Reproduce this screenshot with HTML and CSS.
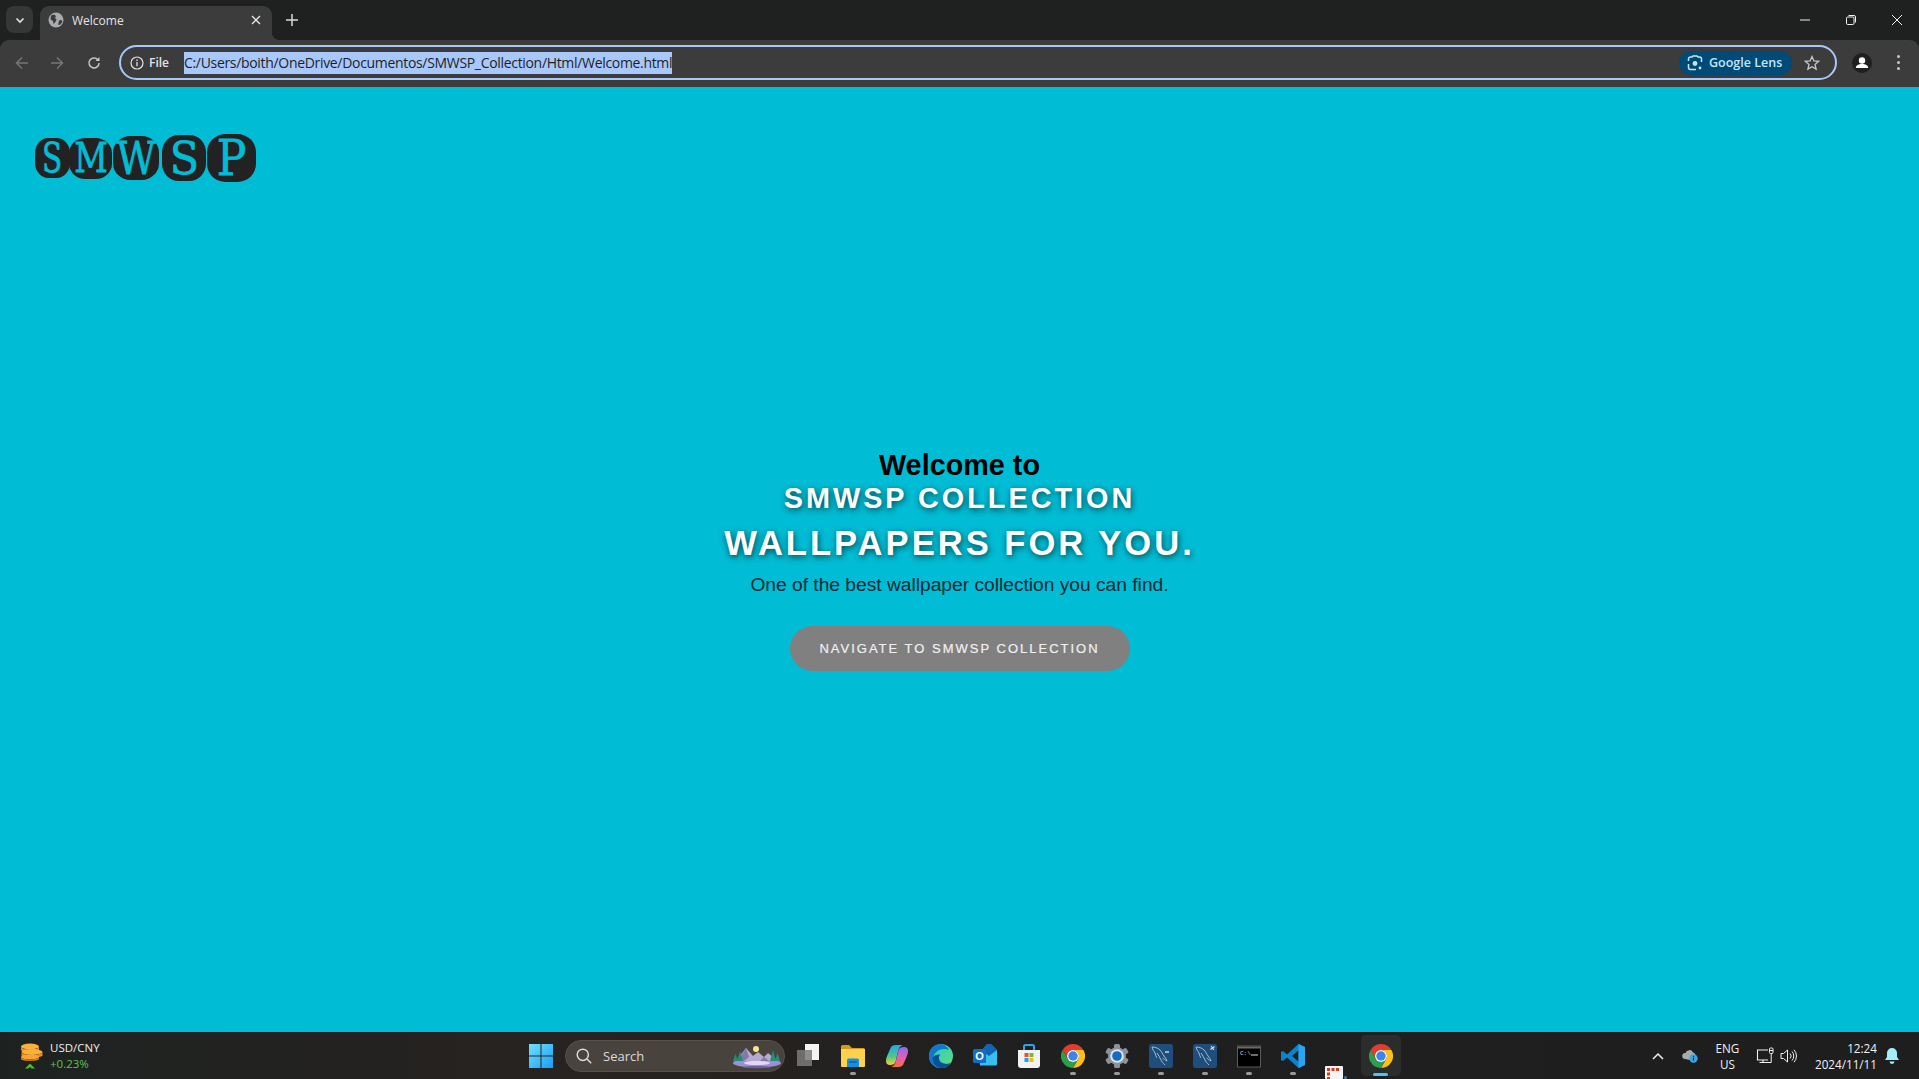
FILE: index.html
```html
<!DOCTYPE html>
<html lang="en">
<head>
    <meta charset="UTF-8">
    <title>Welcome</title>
    <link rel="stylesheet" href="styles.css">
</head>
<body>

    <!-- Pestañas -->
    <div class="tabstrip">
        <div class="tab-search">
            <svg width="12" height="12" viewBox="0 0 12 12"><path d="M2.5 4.5 6 8l3.5-3.5" fill="none" stroke="#e3e3e3" stroke-width="1.6"/></svg>
        </div>
        <div class="tab">
            <svg class="tab-favicon" width="16" height="16" viewBox="0 0 16 16"><circle cx="8" cy="8" r="7.5" fill="#a9abad"/><path d="M3 3.5 6 2.6 8 4 7 6 8.6 7.6 7.4 10 5.6 12 5 9 2.6 7.6ZM11 8.4l2.600-.4.800 2-2.400 3-1.800-.6Z" fill="#3c3c3c"/></svg>
            <span class="tab-title">Welcome</span>
            <svg class="tab-close" width="10" height="10" viewBox="0 0 10 10"><path d="M1 1l8 8M9 1 1 9" stroke="#e3e3e3" stroke-width="1.4"/></svg>
        </div>
        <svg class="new-tab" width="12" height="12" viewBox="0 0 12 12"><path d="M6 0v12M0 6h12" stroke="#d8d8d8" stroke-width="1.5"/></svg>
        <div class="window-controls">
            <svg width="10" height="10" viewBox="0 0 10 10"><path d="M0 5h10" stroke="#f0f0f0"/></svg>
            <svg width="10" height="10" viewBox="0 0 10 10"><rect x=".5" y="2" width="7.500" height="7.500" rx="1.200" fill="none" stroke="#f0f0f0"/><path d="M2.500.5H8a1.500 1.500 0 0 1 1.500 1.500v5.500" fill="none" stroke="#f0f0f0"/></svg>
            <svg width="10" height="10" viewBox="0 0 10 10"><path d="M0 0l10 10M10 0 0 10" stroke="#f0f0f0"/></svg>
        </div>
    </div>

    <!-- Barra de direcciones -->
    <div class="toolbar">
        <svg class="nav-icon" width="14" height="14" viewBox="0 0 14 14"><path d="M13 7H2M7 1.500 1.500 7 7 12.500" fill="none" stroke="#757575" stroke-width="1.500"/></svg>
        <svg class="nav-icon" width="14" height="14" viewBox="0 0 14 14"><path d="M1 7h11M7 1.500 12.500 7 7 12.500" fill="none" stroke="#757575" stroke-width="1.500"/></svg>
        <svg class="nav-icon" width="14" height="14" viewBox="0 0 14 14"><path d="M12 7a5 5 0 1 1-1.500-3.600" fill="none" stroke="#c7c7c7" stroke-width="1.500"/><path d="M12.500 1v4h-4Z" fill="#c7c7c7"/></svg>
        <div class="omnibox">
            <svg class="omni-info" width="14" height="14" viewBox="0 0 14 14"><circle cx="7" cy="7" r="6" fill="none" stroke="#e3e3e3" stroke-width="1.200"/><path d="M7 6v4.200M7 3.600v1.300" stroke="#e3e3e3" stroke-width="1.300"/></svg>
            <span class="omni-file">File</span>
            <span class="omni-url">C:/Users/boith/OneDrive/Documentos/SMWSP_Collection/Html/Welcome.html</span>
            <div class="lens-pill">
                <svg width="16" height="16" viewBox="0 0 16 16"><path d="M1.500 6V4a2 2 0 0 1 2-2H5l1-1h4l1 1h1.500a2 2 0 0 1 2 2v3M1.500 9v3.500a2 2 0 0 0 2 2H9" fill="none" stroke="#c2e7ff" stroke-width="1.500"/><circle cx="8" cy="8.500" r="2.400" fill="#c2e7ff"/><circle cx="13" cy="13" r="1.400" fill="#c2e7ff"/></svg>
                <span>Google Lens</span>
            </div>
            <svg class="omni-star" width="16" height="16" viewBox="0 0 16 16"><path d="M8 1.600 9.900 6l4.700.4-3.600 3.100 1.100 4.600L8 11.700 3.900 14.100 5 9.500 1.400 6.400 6.100 6Z" fill="none" stroke="#c7c7c7" stroke-width="1.300"/></svg>
        </div>
        <div class="profile">
            <svg width="20" height="20" viewBox="0 0 20 20"><circle cx="10" cy="10" r="10" fill="#1f1f1f"/><circle cx="10" cy="7.500" r="3.200" fill="#fff"/><path d="M3.800 15c0-2.800 3-4 6.200-4s6.200 1.200 6.200 4Z" fill="#fff"/></svg>
        </div>
        <div class="kebab"><i></i><i></i><i></i></div>
    </div>

    <!-- Contenido de la página -->
    <main class="page">
        <div class="logo">
            <span class="logo-blob blob-1"><b>S</b></span>
            <span class="logo-blob blob-2"><b>M</b></span>
            <span class="logo-blob blob-3"><b>W</b></span>
            <span class="logo-blob blob-4"><b>S</b></span>
            <span class="logo-blob blob-5"><b>P</b></span>
        </div>
        <section class="hero">
            <h1 class="hero-title">Welcome to<br><span class="hero-name">SMWSP COLLECTION</span></h1>
            <h2 class="hero-sub">WALLPAPERS FOR YOU.</h2>
            <p class="hero-text">One of the best wallpaper collection you can find.</p>
            <button class="hero-btn">NAVIGATE TO SMWSP COLLECTION</button>
        </section>
    </main>

    <!-- Barra de tareas -->
    <footer class="taskbar">
        <div class="widget">
            <div class="widget-icon">
                <svg width="24" height="26" viewBox="0 0 24 26">
                    <ellipse cx="11" cy="3.500" rx="9" ry="3" fill="#fbb03b"/>
                    <path d="M2 3.500v3.500c0 1 3 2 9 2s9-1 9-2V3.500c0 1.600-3 3-9 3s-9-1.400-9-3Z" fill="#f08c1e"/>
                    <ellipse cx="13" cy="9" rx="10.500" ry="3" fill="#fbb03b"/>
                    <path d="M2.500 9v3.500c0 1 4 2 10.500 2s10.500-1 10.500-2V9c0 1.600-4 3-10.500 3S2.500 10.600 2.500 9Z" fill="#f08c1e"/>
                    <ellipse cx="11" cy="14" rx="9" ry="2.500" fill="#f9a531"/>
                    <path d="M2 14v2c0 1 3 1.800 9 1.800s9-.8 9-1.800v-2c0 1.400-3 2.500-9 2.500S2 15.400 2 14Z" fill="#e8831b"/>
                    <path d="M6 25.500 11 20.500l5 5h-3.400L11 23.900 9.400 25.500Z" fill="#46c02a"/>
                </svg>
            </div>
            <div class="widget-text">
                <span>USD/CNY</span>
                <span class="widget-change">+0.23%</span>
            </div>
        </div>

        <svg class="start" width="24" height="24" viewBox="0 0 24 24">
            <defs><linearGradient id="startGrad" x1="0" y1="0" x2="1" y2="1"><stop offset="0" stop-color="#6fe0ff"/><stop offset="1" stop-color="#1a9cf5"/></linearGradient></defs>
            <path d="M0 0h11.500v11.500H0ZM12.500 0H24v11.500H12.500ZM0 12.500h11.500V24H0ZM12.500 12.500H24V24H12.500Z" fill="url(#startGrad)"/>
        </svg>

        <div class="search">
            <svg width="16" height="16" viewBox="0 0 16 16"><circle cx="6.800" cy="6.800" r="5.600" fill="none" stroke="#dcdad6" stroke-width="1.500"/><path d="M11 11l4.200 4.200" stroke="#dcdad6" stroke-width="1.500"/></svg>
            <span class="search-label">Search</span>
            <svg class="search-art" width="50" height="26" viewBox="0 0 50 26">
                <ellipse cx="25" cy="20" rx="24" ry="4.500" fill="#9a8fd8"/>
                <ellipse cx="25" cy="20" rx="13" ry="2.200" fill="#e4d6f5"/>
                <circle cx="24" cy="6" r="3" fill="#fbe38a"/>
                <path d="M4 18 14 5l7 8 5-4 6 5 4-4 10 8Z" fill="#b6a9cf"/>
                <path d="M14 5l3 9-5 4H6ZM32 14l5 4h-9Z" fill="#7f7aa8"/>
                <path d="M5 18 8 8l3 10ZM1 18l2.500-7L6 18ZM38 18l3-11 3 11ZM43 18l2.500-8L48 18Z" fill="#2a8a78"/>
                <ellipse cx="25" cy="24" rx="14" ry="1.200" fill="#6b62a8"/>
            </svg>
        </div>

        <div class="apps">
            <div class="app">
                <svg width="24" height="24" viewBox="0 0 24 24"><rect x="8" y="0" width="14" height="16" fill="#f4f4f4"/><rect x="0" y="6" width="15" height="16" fill="#7a7a7a" opacity=".85"/></svg>
            </div>
            <div class="app app-open">
                <svg width="24" height="24" viewBox="0 0 24 24"><path d="M0 2.500A1.500 1.500 0 0 1 1.500 1H8l3 3h11.500A1.500 1.500 0 0 1 24 5.500V9H0Z" fill="#d39a1a"/><path d="M0 5h24v17a1 1 0 0 1-1 1H1a1 1 0 0 1-1-1Z" fill="#fbd24e"/><path d="M6 16a1.500 1.500 0 0 1 1.500-1.500h9A1.500 1.500 0 0 1 18 16v7H6Z" fill="#1a8fe0"/><path d="M8 18h8" stroke="#0a5fae" stroke-width="1.500"/></svg>
            </div>
            <div class="app">
                <svg width="24" height="24" viewBox="0 0 24 24">
                    <defs><linearGradient id="coA" x1="0" y1="0" x2="0" y2="1"><stop offset="0" stop-color="#2a9ff0"/><stop offset=".55" stop-color="#46c98a"/><stop offset="1" stop-color="#f4d13c"/></linearGradient><linearGradient id="coB" x1="0" y1="0" x2="0" y2="1"><stop offset="0" stop-color="#8a6cf2"/><stop offset=".55" stop-color="#e55fb4"/><stop offset="1" stop-color="#f4703a"/></linearGradient></defs>
                    <path d="M6 3Q7.500 1 10 1H18Q14.500 2 13.300 6L10.500 18Q9.500 21 5 21 1 21 1 17 1 14 2.500 11Z" fill="url(#coA)"/>
                    <path d="M18 21Q16.500 23 14 23H6Q9.500 22 10.700 18L13.500 6Q14.500 3 19 3 23 3 23 7 23 10 21.500 13Z" fill="url(#coB)"/>
                </svg>
            </div>
            <div class="app">
                <svg width="24" height="24" viewBox="0 0 24 24">
                    <defs><linearGradient id="edgeA" x1="0" y1="0" x2="1" y2="1"><stop offset="0" stop-color="#2bc3d6"/><stop offset="1" stop-color="#5fe07a"/></linearGradient></defs>
                    <circle cx="12" cy="12" r="12" fill="url(#edgeA)"/>
                    <path d="M12 0C5.400 0 0 5.400 0 12c0 6.600 5.400 12 12 12 4 0 7.500-2 9.600-5-2 1-6 1.500-9-.5C9.500 16.500 9 12.500 11 10.500c-3-.5-6 1-7 4C5 7.500 12 3 20 6 18 2.500 15.200 0 12 0Z" fill="#0f78c8"/>
                    <path d="M3.500 14c0 5 4 9.500 9 10 3.500 0 6.800-1.800 9-5-3 1.400-7 1.200-9.800-.8C9.400 16 9.400 12.500 11 10.800 7.500 10.200 4.500 11.500 3.500 14Z" fill="#0a4f96"/>
                </svg>
            </div>
            <div class="app">
                <svg width="24" height="24" viewBox="0 0 24 24">
                    <path d="M14 0h4l6 6v13a1.500 1.500 0 0 1-1.500 1.500H9V6Z" fill="#1b86d6"/>
                    <path d="M6 13l18-7v14a1.500 1.500 0 0 1-1.500 1.500H7Z" fill="#35c0f0"/>
                    <path d="M14 0h4l6 6-8 6-7-5Z" fill="#0f64b6"/>
                    <rect x="0" y="5" width="13" height="14" rx="1.500" fill="#0f6cc8"/>
                    <text class="outlook-o" x="6.500" y="16.200" text-anchor="middle">O</text>
                </svg>
            </div>
            <div class="app">
                <svg width="24" height="24" viewBox="0 0 24 24">
                    <path d="M7 6V2.500A1.500 1.500 0 0 1 8.500 1h7A1.500 1.500 0 0 1 17 2.500V6" fill="none" stroke="#29a6e8" stroke-width="2"/>
                    <path d="M1 6h22v15a3 3 0 0 1-3 3H4a3 3 0 0 1-3-3Z" fill="#f2f2f2"/>
                    <rect x="7.500" y="9" width="4" height="4" fill="#f0502e"/><rect x="12.500" y="9" width="4" height="4" fill="#7fba2a"/>
                    <rect x="7.500" y="14" width="4" height="4" fill="#1ca4ee"/><rect x="12.500" y="14" width="4" height="4" fill="#fcb813"/>
                </svg>
            </div>
            <div class="app app-open">
                <svg width="24" height="24" viewBox="0 0 48 48"><use href="#chromeIcon"/></svg>
            </div>
            <div class="app app-open">
                <svg width="24" height="24" viewBox="0 0 24 24">
                    <g fill="#8b929b">
                        <rect x="9" y="0" width="6" height="24" rx="1.500"/>
                        <rect x="9" y="0" width="6" height="24" rx="1.500" transform="rotate(60 12 12)"/>
                        <rect x="9" y="0" width="6" height="24" rx="1.500" transform="rotate(120 12 12)"/>
                        <circle cx="12" cy="12" r="9"/>
                    </g>
                    <circle cx="12" cy="12" r="6.800" fill="#e4e6e8"/><circle cx="12" cy="12" r="4.800" fill="#0f6cc8"/>
                </svg>
            </div>
            <div class="app app-open">
                <svg width="24" height="24" viewBox="0 0 24 24"><use href="#mysqlIcon"/><path d="M16 8h4" stroke="#d5dde6" stroke-width="1.400"/></svg>
            </div>
            <div class="app app-open">
                <svg width="24" height="24" viewBox="0 0 24 24"><use href="#mysqlIcon"/><path d="M18 2l3 4M21.500 2.500l-4 3" stroke="#d5dde6" stroke-width="1.200"/></svg>
            </div>
            <div class="app app-open">
                <svg width="24" height="24" viewBox="0 0 24 24"><rect x=".5" y="2" width="23" height="21" fill="#000" stroke="#5a5a5a"/><rect x="1" y="2.500" width="22" height="2" fill="#6a6a6a"/><text class="cmd-text" x="3" y="11">C:\</text><path d="M14 11h7" stroke="#d8d8d8"/></svg>
            </div>
            <div class="app app-open">
                <svg width="24" height="24" viewBox="0 0 24 24"><path d="M17.500 0 24 3v18l-6.500 3L6 13.500 2 17l-2-1V8l2-1 4 3.500Zm0 6.500L11 12l6.500 5.500Z" fill="#0a82d0"/><path d="M17.500 0 24 3v18l-6.500 3Z" fill="#2aa3f0"/></svg>
            </div>
            <div class="app app-float">
                <svg class="float-doc" width="22" height="13" viewBox="0 0 22 13"><rect width="18" height="13" rx="1" fill="#f4f4f4"/><path d="M2 2h3v3H2ZM6.500 2h3v3h-3ZM11 2h3v3h-3ZM2 6.500h3v3H2ZM2 11h3v2H2Z" fill="#d9361f"/><circle cx="20.500" cy="11.500" r="1.500" fill="#2a7fb8"/></svg>
            </div>
            <div class="app app-active">
                <svg width="24" height="24" viewBox="0 0 48 48"><use href="#chromeIcon"/></svg>
            </div>
        </div>

        <div class="tray">
            <svg class="tray-chevron" width="12" height="8" viewBox="0 0 12 8"><path d="M1 7l5-5 5 5" fill="none" stroke="#f0f0f0" stroke-width="1.500"/></svg>
            <svg class="tray-cloud" width="16" height="14" viewBox="0 0 16 14"><path d="M3 10a3 3 0 0 1 .5-6A4 4 0 0 1 11 3.500a3 3 0 0 1 2 4.500L8 11Z" fill="#a9acaf"/><circle cx="11.500" cy="9.500" r="4.200" fill="#3ba7e8"/><path d="M11.500 8.600v3M11.500 6.800v1" stroke="#102030" stroke-width="1.200"/></svg>
            <div class="tray-lang"><span>ENG</span><span>US</span></div>
            <svg class="tray-net" width="18" height="18" viewBox="0 0 18 18"><path d="M12 3H1.500v10H12M3.500 15.500h8M7 13v2.500" fill="none" stroke="#f0f0f0" stroke-width="1.100"/><rect x="13.500" y="1" width="3.500" height="5.500" rx="1" fill="none" stroke="#f0f0f0"/><path d="M15.200 6.500v9H11M13.500 3.500h3.500" fill="none" stroke="#f0f0f0"/></svg>
            <svg class="tray-sound" width="17" height="16" viewBox="0 0 17 16"><path d="M1 5.500h2.500L7.500 2v12l-4-3.500H1Z" fill="none" stroke="#f0f0f0" stroke-width="1"/><path d="M10 5.500a3.500 3.500 0 0 1 0 5M12 3.500a6.500 6.500 0 0 1 0 9M14 1.800a9 9 0 0 1 0 12.400" fill="none" stroke="#f0f0f0" stroke-width="1"/></svg>
            <div class="tray-clock"><span>12:24</span><span>2024/11/11</span></div>
            <svg class="tray-bell" width="14" height="16" viewBox="0 0 14 16"><path d="M7 0a5 5 0 0 1 5 5v4l2 3H0l2-3V5a5 5 0 0 1 5-5Z" fill="#a5ecfb"/><path d="M4.500 13.500h5a2.500 2.500 0 0 1-5 0Z" fill="#a5ecfb"/></svg>
        </div>
    </footer>

    <!-- Iconos compartidos -->
    <svg class="icon-defs" width="0" height="0">
        <defs>
            <g id="chromeIcon">
                <path d="M3.200 12A24 24 0 0 1 44.800 12H24A12 12 0 0 0 13.600 30Z" fill="#e33b2e"/>
                <path d="M44.800 12A24 24 0 0 1 24 48L34.400 30A12 12 0 0 0 24 12Z" fill="#fbc116"/>
                <path d="M24 48A24 24 0 0 1 3.200 12L13.600 30A12 12 0 0 0 34.400 30Z" fill="#2f9e4a"/>
                <circle cx="24" cy="24" r="12" fill="#fff"/>
                <circle cx="24" cy="24" r="9.500" fill="#3f84ee"/>
            </g>
            <g id="mysqlIcon">
                <rect width="24" height="24" rx="2.500" fill="#1e4f7c"/>
                <path d="M3 3c3 0 6 1 8 3 2 2 2.500 4 4 6 1 1.400 2.500 3 3 5-2-1-3-2-4.500-3M3 3c.5 3 2 4 3 6 .8 2 .8 3.400 1.800 4.800M8 9c1.500 2 3 5 4 7 .7 1.500 2 3 4 5" fill="none" stroke="#c6d3df" stroke-width=".8"/>
            </g>
        </defs>
    </svg>

</body>
</html>
```

FILE: styles.css
```css
* {
    box-sizing: border-box;
}
body {
    margin: 0;
    height: 100vh;
    overflow: hidden;
    display: flex;
    flex-direction: column;
    background: #1f2120;
    font-family: "Liberation Sans", Arial, sans-serif;
}

/* Pestañas */
.tabstrip {
    height: 40px;
    flex: none;
    display: flex;
    align-items: flex-start;
    padding: 6px 0 0 6px;
}
.tab-search {
    width: 27px;
    height: 27px;
    border-radius: 8px;
    background: #353636;
    display: flex;
    align-items: center;
    justify-content: center;
}
.tab {
    position: relative;
    width: 232px;
    height: 34px;
    margin-left: 7px;
    padding: 0 11px 6px 8px;
    display: flex;
    align-items: center;
    background: #3c3c3c;
    border-radius: 9px 9px 0 0;
    color: #e3e3e3;
    font-family: "Open Sans", sans-serif;
    font-size: 12px;
}
.tab::after {
    content: "";
    position: absolute;
    right: -8px;
    bottom: 0;
    width: 8px;
    height: 8px;
    background: radial-gradient(circle at 100% 0, transparent 8px, #3c3c3c 8.5px);
}
.tab-favicon {
    flex: none;
}
.tab-title {
    margin-left: 8px;
    flex: 1;
}
.new-tab {
    margin: 8px 0 0 14px;
}
.window-controls {
    margin-left: auto;
    padding: 9px 17px 0 0;
    display: flex;
    gap: 36px;
}

/* Barra de direcciones */
.toolbar {
    height: 47px;
    flex: none;
    display: flex;
    align-items: center;
    background: #3c3c3c;
    border-radius: 9px 9px 0 0;
    padding: 0 0 2px 15px;
}
.nav-icon {
    flex: none;
    margin-right: 21px;
}
.nav-icon:nth-child(2) {
    margin-right: 23px;
}
.nav-icon:nth-child(3) {
    margin-right: 18px;
}
.omnibox {
    width: 1718px;
    height: 35px;
    flex: none;
    display: flex;
    align-items: center;
    border: 2px solid #a8c7fa;
    border-radius: 18px;
    padding: 0 10px 0 9px;
}
.omni-file {
    margin-left: 5px;
    color: #e3e3e3;
    font-family: "Open Sans", sans-serif;
    font-size: 12px;
    font-weight: 600;
}
.omni-url {
    margin-left: 15px;
    height: 22px;
    line-height: 22px;
    background: #a8c7fa;
    color: #1f1f1f;
    font-family: "Open Sans", sans-serif;
    font-size: 14px;
    letter-spacing: -0.32px;
}
.lens-pill {
    margin-left: auto;
    width: 113px;
    height: 24px;
    display: flex;
    align-items: center;
    gap: 6px;
    padding-left: 8px;
    background: #004a77;
    border-radius: 12px;
    color: #c2e7ff;
    font-family: "Open Sans", sans-serif;
    font-size: 12.5px;
    font-weight: 600;
}
.omni-star {
    margin: 0 5px 0 12px;
    flex: none;
}
.profile {
    margin-left: 15px;
    height: 20px;
}
.kebab {
    margin-left: 25px;
    display: flex;
    flex-direction: column;
    gap: 3px;
}
.kebab i {
    display: block;
    width: 3px;
    height: 3px;
    border-radius: 50%;
    background: #c7c7c7;
}

/* Contenido de la página */
.page {
    flex: 1;
    display: grid;
    background: #00bcd4;
}
.logo {
    grid-area: 1 / 1;
    align-self: start;
    justify-self: start;
    margin: 47px 0 0 35px;
    display: flex;
    align-items: center;
    font-family: "DejaVu Serif", serif;
    color: #00bcd4;
}
.logo-blob {
    display: flex;
    align-items: center;
    justify-content: center;
    background: #222;
    border-radius: 38%;
    line-height: 1;
}
.logo-blob b {
    display: block;
    font-weight: normal;
    -webkit-text-stroke: 0.8px #00bcd4;
}
.blob-1 {
    width: 35px;
    height: 40px;
    font-size: 41px;
}
.blob-1 b {
    transform: scaleX(0.72);
}
.blob-2 {
    width: 43px;
    height: 41px;
    margin-left: -1px;
    font-size: 41px;
}
.blob-2 b {
    transform: scaleX(0.8);
}
.blob-3 {
    width: 46px;
    height: 44px;
    margin-left: 1px;
    font-size: 45px;
}
.blob-3 b {
    transform: scaleX(0.85);
}
.blob-4 {
    width: 44px;
    height: 46px;
    margin-left: 3px;
    font-size: 45px;
}
.blob-4 b {
    transform: scaleX(0.95);
}
.blob-5 {
    width: 49px;
    height: 48px;
    margin-left: 1px;
    font-size: 49px;
}
.blob-5 b {
    transform: scaleX(0.9);
}
.hero {
    grid-area: 1 / 1;
    align-self: center;
    justify-self: center;
    padding-top: 1px;
    text-align: center;
}
.hero-title {
    margin: 0;
    font-size: 28.8px;
    font-weight: bold;
    color: #000;
}
.hero-name {
    color: #fff;
    letter-spacing: 3px;
    text-shadow: 1px 2px 6px rgba(0, 0, 0, 0.65);
}
.hero-sub {
    margin: 9px 0 0;
    font-size: 34.6px;
    font-weight: bold;
    color: #fff;
    letter-spacing: 3px;
    text-shadow: 1px 2px 6px rgba(0, 0, 0, 0.65);
}
.hero-text {
    margin: 11px 0 0;
    font-size: 19.2px;
    color: #0b2a33;
}
.hero-btn {
    display: block;
    margin: 30px auto 0;
    width: 340px;
    height: 45px;
    border: none;
    border-radius: 23px;
    background: #808080;
    color: #f0f0f0;
    font-family: "Liberation Sans", Arial, sans-serif;
    font-size: 13px;
    letter-spacing: 2px;
    -webkit-text-stroke: 0.2px #f0f0f0;
}

/* Barra de tareas */
.taskbar {
    height: 47px;
    flex: none;
    display: flex;
    align-items: center;
    background: linear-gradient(90deg, #1d2221 0%, #282320 30%, #1f1f1f 55%, #1e1e1f 100%);
    color: #f0f0f0;
}
.widget {
    width: 529px;
    flex: none;
    display: flex;
    align-items: center;
    padding-left: 19px;
}
.widget-icon {
    width: 31px;
    height: 26px;
}
.widget-text {
    display: flex;
    flex-direction: column;
    gap: 2px;
    font-family: "Open Sans", sans-serif;
    font-size: 11.5px;
    line-height: 14px;
}
.widget-change {
    color: #5bc152;
}
.start {
    flex: none;
}
.search {
    width: 220px;
    height: 32px;
    margin-left: 12px;
    flex: none;
    display: flex;
    align-items: center;
    padding-left: 10px;
    background: #48443d;
    border: 1px solid #55514a;
    border-radius: 16px;
}
.search-label {
    margin-left: 11px;
    color: #dcdad6;
    font-family: "Open Sans", sans-serif;
    font-size: 13px;
}
.search-art {
    margin-left: auto;
    margin-right: 2px;
}
.apps {
    margin-left: 2px;
    display: flex;
    height: 100%;
}
.app {
    position: relative;
    width: 44px;
    display: flex;
    align-items: center;
    justify-content: center;
}
.app-open::after {
    content: "";
    position: absolute;
    left: 19px;
    bottom: 4px;
    width: 6px;
    height: 3px;
    border-radius: 2px;
    background: #9a9a9a;
}
.app-float .float-doc {
    position: absolute;
    left: 10px;
    bottom: 0;
}
.app-active {
    background: #2b2c2c;
    border-radius: 5px;
    height: 41px;
    margin-top: 3px;
    width: 40px;
    margin-left: 2px;
}
.app-active::after {
    content: "";
    position: absolute;
    left: 12px;
    bottom: 0;
    width: 15px;
    height: 3px;
    border-radius: 2px;
    background: #4cc2ff;
}
.tray {
    margin-left: auto;
    padding-right: 20px;
    display: flex;
    align-items: center;
    font-family: "Open Sans", sans-serif;
    font-size: 11.7px;
    line-height: 16px;
}
.tray-chevron {
    margin-right: 17.5px;
}
.tray-cloud {
    margin-right: 16.5px;
}
.tray-lang {
    width: 26px;
    display: flex;
    flex-direction: column;
    align-items: center;
    margin-right: 15.5px;
}
.tray-net {
    margin-right: 6px;
}
.tray-sound {
    margin-right: 18px;
}
.tray-clock {
    display: flex;
    flex-direction: column;
    align-items: flex-end;
    margin-right: 8px;
}
.outlook-o {
    fill: #fff;
    font-family: "Liberation Sans", sans-serif;
    font-size: 11px;
    font-weight: bold;
}
.cmd-text {
    fill: #d8d8d8;
    font-family: "Liberation Mono", monospace;
    font-size: 6px;
}
.icon-defs {
    position: absolute;
}
```
